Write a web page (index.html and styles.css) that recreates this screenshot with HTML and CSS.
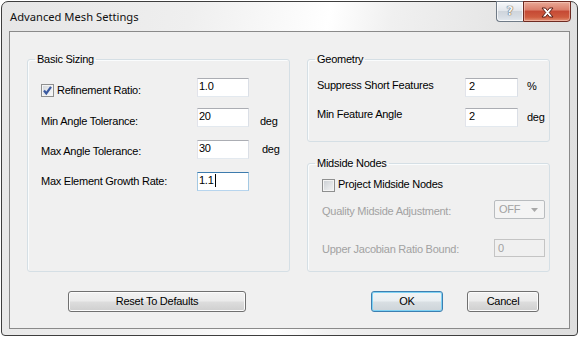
FILE: index.html
```html
<!DOCTYPE html>
<html>
<head>
<meta charset="utf-8">
<title>Advanced Mesh Settings</title>
<link rel="stylesheet" href="styles.css">
</head>
<body>
<div class="window">
  <div class="titlebar">
    <span class="title">Advanced Mesh Settings</span>
    <div class="caption-buttons">
      <div class="cbtn help">?</div>
      <div class="cbtn close">
        <svg width="13" height="11" viewBox="0 0 13 11"><path d="M1 1 H4.5 L6.5 3.6 L8.5 1 H12 L8.3 5.5 L12 10 H8.5 L6.5 7.4 L4.5 10 H1 L4.7 5.5 Z" fill="#fff" stroke="#5b1d14" stroke-width="1" stroke-linejoin="round"/></svg>
      </div>
    </div>
  </div>
  <div class="client">
    <div class="groups">
      <fieldset class="group basic">
        <legend>Basic Sizing</legend>
        <div class="group-body basic-body">
          <div class="row">
            <div class="label-col check-label">
              <span class="checkbox checked"><svg width="11" height="11" viewBox="0 0 11 11"><path d="M2 5.5 L4.3 8.5 L9 1.8" fill="none" stroke="#3b5aa0" stroke-width="2.2"/></svg></span>
              <span>Refinement Ratio:</span>
            </div>
            <div class="textbox">1.0</div>
          </div>
          <div class="row">
            <div class="label-col"><span class="lbl down-7">Min Angle Tolerance:</span></div>
            <div class="textbox">20</div>
            <span class="unit down-7">deg</span>
          </div>
          <div class="row">
            <div class="label-col"><span class="lbl down-5">Max Angle Tolerance:</span></div>
            <div class="textbox">30</div>
            <span class="unit down-3 shift">deg</span>
          </div>
          <div class="row">
            <div class="label-col"><span class="lbl down-3">Max Element Growth Rate:</span></div>
            <div class="textbox focused">1.1<span class="caret"></span></div>
          </div>
        </div>
      </fieldset>
      <div class="right-col">
        <fieldset class="group geometry">
          <legend>Geometry</legend>
          <div class="group-body geometry-body">
            <div class="row">
              <div class="label-col"><span class="lbl down-1">Suppress Short Features</span></div>
              <div class="textbox">2</div>
              <span class="unit down-2">%</span>
            </div>
            <div class="row">
              <div class="label-col"><span class="lbl">Min Feature Angle</span></div>
              <div class="textbox">2</div>
              <span class="unit down-3">deg</span>
            </div>
          </div>
        </fieldset>
        <fieldset class="group midside">
          <legend>Midside Nodes</legend>
          <div class="group-body midside-body">
            <div class="check-row">
              <span class="checkbox"></span>
              <span>Project Midside Nodes</span>
            </div>
            <div class="row disabled quality">
              <div class="label-col"><span class="lbl down-5">Quality Midside Adjustment:</span></div>
              <div class="combo">
                <span>OFF</span>
                <svg width="7" height="4" viewBox="0 0 7 4"><path d="M0 0 H7 L3.5 4 Z" fill="#a8a8a8"/></svg>
              </div>
            </div>
            <div class="row disabled jacobian">
              <div class="label-col"><span class="lbl down-4">Upper Jacobian Ratio Bound:</span></div>
              <div class="textbox disabled-box">0</div>
            </div>
          </div>
        </fieldset>
      </div>
    </div>
    <div class="buttons">
      <button class="btn reset">Reset To Defaults</button>
      <button class="btn ok">OK</button>
      <button class="btn cancel">Cancel</button>
    </div>
  </div>
</div>
</body>
</html>
```
FILE: styles.css
```css
* { box-sizing: border-box; }
html, body { margin: 0; padding: 0; }
body {
  width: 581px;
  height: 338px;
  padding: 1px 0 0 1px;
  background: #ffffff;
  font-family: "Liberation Sans", Arial, sans-serif;
  font-size: 11px;
  line-height: 13px;
  letter-spacing: -0.25px;
  color: #000;
  overflow: hidden;
}
.window {
  width: 577px;
  height: 335px;
  border: 1px solid #3e3e3e;
  border-radius: 7px 7px 4px 4px;
  background: linear-gradient(100deg, #e6e6e6 0%, #efefef 30%, #fbfbfb 47%, #ffffff 52%, #f0f0f0 62%, #e2e2e2 85%, #dedede 100%);
  display: flex;
  flex-direction: column;
}
.titlebar {
  height: 29px;
  display: flex;
  justify-content: space-between;
  align-items: flex-start;
  flex: none;
}
.title {
  font-family: "Noto Sans", "Open Sans", sans-serif;
  font-size: 11.2px;
  line-height: 15px;
  letter-spacing: 0;
  padding: 7px 0 0 8px;
  color: #111;
}
.caption-buttons {
  display: flex;
  margin-right: 6px;
  margin-top: -1px;
}
.cbtn {
  height: 21px;
  display: flex;
  align-items: center;
  justify-content: center;
}
.help {
  width: 27px;
  border: 1px solid #6f7a86;
  border-right: none;
  border-radius: 0 0 0 4px;
  background: linear-gradient(#f6f8fa 0%, #e3e7ec 45%, #cfd5dc 50%, #d8dee5 80%, #e4e9ee 100%);
  box-shadow: inset 0 0 0 1px rgba(255,255,255,0.7);
  font-family: "DejaVu Sans", sans-serif;
  font-weight: bold;
  font-size: 12px;
  letter-spacing: 0;
  color: #f4f4f4;
  text-shadow: 0 0 1px #444, 0 0 1px #444;
}
.close {
  width: 48px;
  border: 1px solid #6e2a21;
  border-radius: 0 0 4px 0;
  background: linear-gradient(#e9a996 0%, #db806c 40%, #c64a35 50%, #cf5c3f 80%, #e39276 100%);
  box-shadow: inset 0 0 0 1px rgba(255,220,210,0.45);
  padding-top: 2px;
}
.client {
  flex: 1;
  margin: 0 7px 6px 7px;
  border: 1px solid #8a8a8a;
  background: #f0f0f0;
  display: flex;
  flex-direction: column;
}
.groups {
  display: flex;
  gap: 17px;
  padding: 21px 0 0 17px;
}
.group {
  margin: 0;
  padding: 0;
  border: 1px solid #d5dfe5;
  border-radius: 3px;
  box-shadow: inset 1px 1px 0 #fafcfd;
  min-width: 0;
}
.group legend {
  padding: 0 2px;
  margin-left: 7px;
  line-height: 13px;
}
.basic { width: 263px; }
.right-col {
  width: 243px;
  display: flex;
  flex-direction: column;
  gap: 15px;
}
.row {
  display: flex;
  align-items: flex-start;
  height: 19px;
}
.basic-body { padding: 12px 0 0 13px; }
.basic-body .row + .row { margin-top: 11px; }
.basic-body .row:nth-child(3), .basic-body .row:nth-child(4) { margin-top: 13px; }
.basic-body .label-col { width: 156px; }
.basic-body .textbox { width: 52px; padding-left: 1px; }
.basic-body .unit { margin-left: 11px; }
.basic-body .unit.shift { margin-left: 13px; }
.label-col { flex: none; }
.lbl { display: block; }
.down-1 { margin-top: 1px; }
.down-2 { margin-top: 2px; }
.down-3 { margin-top: 3px; }
.down-4 { margin-top: 4px; }
.down-5 { margin-top: 5px; }
.down-7 { margin-top: 7px; }
.check-label {
  display: flex;
  align-items: flex-start;
  gap: 3px;
  padding-top: 6px;
}
.checkbox {
  width: 13px;
  height: 13px;
  flex: none;
  border: 1px solid #8e8f8f;
  background: linear-gradient(135deg, #c9cdd2 0%, #e4e6e8 60%, #f4f4f4 100%);
  box-shadow: inset 0 0 0 1px #f4f4f4;
  display: flex;
  align-items: center;
  justify-content: center;
}
.checkbox.checked {
  background: linear-gradient(135deg, #cfd3d8 0%, #eceef0 60%, #f8f8f8 100%);
}
.textbox {
  height: 19px;
  border: 1px solid;
  border-color: #abadb3 #dbdfe6 #e3e9ef #e2e3ea;
  background: #fff;
  padding: 1px 2px 0 2px;
  line-height: 13px;
  display: flex;
  align-items: flex-start;
}
.textbox.focused {
  border-color: #3d7bad #a4c9e3 #b7d5ee #a4c9e3;
}
.caret {
  display: inline-block;
  width: 1px;
  height: 13px;
  background: #000;
  margin-left: 1px;
}
.geometry-body { padding: 12px 0 14px 9px; }
.geometry-body .row + .row { margin-top: 11px; }
.geometry-body .label-col { width: 148px; }
.geometry-body .textbox { width: 53px; padding-left: 3px; }
.geometry-body .unit { margin-left: 9px; }
.midside-body { padding: 8px 0 13px 14px; }
.check-row {
  display: flex;
  align-items: flex-start;
  gap: 3px;
  height: 13px;
}
.check-row .checkbox { margin-top: 1px; }
.midside-body .label-col { width: 172px; }
.disabled { color: #a2a2a2; }
.quality { margin-top: 9px; }
.jacobian { margin-top: 20px; }
.combo {
  width: 51px;
  height: 19px;
  border: 1px solid #b9bcbf;
  border-radius: 2px;
  background: #f4f4f4;
  display: flex;
  align-items: center;
  justify-content: space-between;
  padding: 0 6px 0 4px;
  color: #a2a2a2;
}
.disabled-box {
  width: 51px;
  border: 1px solid #c4c4c4;
  background: #f0f0f0;
  color: #a2a2a2;
  padding: 2px 3px 0 3px;
  height: 18px;
}
.buttons {
  display: flex;
  margin-top: 19px;
  padding: 0 30px 0 58px;
}
.btn {
  height: 21px;
  border: 1px solid #707070;
  border-radius: 3px;
  background: linear-gradient(#f2f2f2 0%, #ebebeb 48%, #dddddd 52%, #cfcfcf 100%);
  box-shadow: inset 0 0 0 1px #fbfbfb;
  font-family: "Liberation Sans", Arial, sans-serif;
  font-size: 11px;
  line-height: 13px;
  letter-spacing: -0.25px;
  color: #000;
  padding: 0;
  margin: 0;
}
.reset { width: 178px; }
.ok {
  width: 72px;
  margin-left: auto;
  border-color: #3c7fb1;
  box-shadow: inset 0 0 0 1px #7fd2f4;
  background: linear-gradient(#f1f4f6 0%, #e9eef1 48%, #d9dfe3 52%, #cdd4d9 100%);
}
.cancel { width: 72px; margin-left: 24px; }
```
